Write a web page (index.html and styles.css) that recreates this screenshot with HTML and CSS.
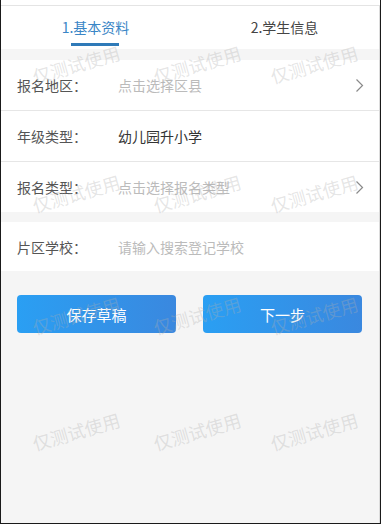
FILE: index.html
```html
<!DOCTYPE html>
<html lang="zh-CN">
<head>
<meta charset="utf-8">
<title>报名</title>
<link rel="stylesheet" href="styles.css">
</head>
<body>
<div class="frame">
  <div class="page">
    <div class="tabs">
      <div class="tab active">1.基本资料</div>
      <div class="tab">2.学生信息</div>
    </div>
    <div class="group">
      <div class="row">
        <span class="label">报名地区：</span>
        <span class="value placeholder">点击选择区县</span>
        <svg class="chev" width="9" height="15" viewBox="0 0 9 15"><path d="M1.5 1.5 L7.5 7.5 L1.5 13.5" fill="none" stroke="#8a8a8a" stroke-width="1.2"/></svg>
      </div>
      <div class="row">
        <span class="label">年级类型：</span>
        <span class="value">幼儿园升小学</span>
      </div>
      <div class="row">
        <span class="label">报名类型：</span>
        <span class="value placeholder">点击选择报名类型</span>
        <svg class="chev" width="9" height="15" viewBox="0 0 9 15"><path d="M1.5 1.5 L7.5 7.5 L1.5 13.5" fill="none" stroke="#8a8a8a" stroke-width="1.2"/></svg>
      </div>
    </div>
    <div class="group">
      <div class="row">
        <span class="label">片区学校：</span>
        <span class="value placeholder">请输入搜索登记学校</span>
      </div>
    </div>
    <div class="actions">
      <button class="btn">保存草稿</button>
      <button class="btn">下一步</button>
    </div>
  </div>
  <div class="watermarks">
    <span class="wm" style="left:75px;top:64px">仅测试使用</span>
    <span class="wm" style="left:196px;top:64px">仅测试使用</span>
    <span class="wm" style="left:313px;top:64px">仅测试使用</span>
    <span class="wm" style="left:75px;top:193px">仅测试使用</span>
    <span class="wm" style="left:196px;top:193px">仅测试使用</span>
    <span class="wm" style="left:313px;top:193px">仅测试使用</span>
    <span class="wm" style="left:75px;top:315px">仅测试使用</span>
    <span class="wm" style="left:196px;top:315px">仅测试使用</span>
    <span class="wm" style="left:313px;top:315px">仅测试使用</span>
    <span class="wm" style="left:75px;top:431px">仅测试使用</span>
    <span class="wm" style="left:196px;top:431px">仅测试使用</span>
    <span class="wm" style="left:313px;top:431px">仅测试使用</span>
  </div>
</div>
</body>
</html>
```
FILE: styles.css
```css
html, body {
  margin: 0;
  padding: 0;
  background: #ffffff;
}
body {
  font-family: "Noto Sans CJK SC", "Noto Sans", "Liberation Sans", sans-serif;
  width: 381px;
  height: 524px;
  overflow: hidden;
}
.frame {
  position: relative;
  box-sizing: border-box;
  width: 381px;
  height: 524px;
  border-left: 1px solid #1a1a1a;
  border-right: 1px solid #1a1a1a;
  border-bottom: 1px solid #1a1a1a;
  padding-top: 5px;
  background: #ffffff;
  overflow: hidden;
}
.page {
  box-sizing: border-box;
  height: 100%;
  border-top: 1px solid #e4e4e4;
  border-right: 1px solid #dcdcdc;
  background: #f5f5f5;
}
.tabs {
  display: flex;
  height: 43px;
  background: #ffffff;
}
.tab {
  flex: 1;
  display: flex;
  align-items: center;
  justify-content: center;
  position: relative;
  font-size: 14px;
  color: #444444;
  padding-bottom: 2px;
}
.tab.active {
  color: #3a86c6;
}
.tab.active::after {
  content: "";
  position: absolute;
  left: 50%;
  bottom: 3px;
  width: 48px;
  height: 3px;
  margin-left: -25px;
  background: #2f7ab8;
}
.group {
  margin-top: 11px;
  background: #ffffff;
}
.group + .group {
  margin-top: 10px;
}
.row {
  display: flex;
  align-items: center;
  height: 50px;
  padding: 0 15px 0 16px;
  border-bottom: 1px solid #e6e6e6;
  font-size: 14px;
}
.row:last-child {
  border-bottom: none;
}
.group + .group .row {
  height: 49px;
}
.label {
  width: 101px;
  color: #555555;
  flex: none;
}
.value {
  flex: 1;
  color: #333333;
}
.placeholder {
  color: #bbbbbb;
}
.chev {
  flex: none;
  margin-top: 1px;
}
.actions {
  display: flex;
  justify-content: space-between;
  padding: 24px 17px 0 16px;
}
.btn {
  width: 159px;
  height: 38px;
  border: none;
  border-radius: 4px;
  background: linear-gradient(to right, #2a9ff3, #3a88df);
  color: #ffffff;
  font-family: inherit;
  font-size: 15px;
  padding: 0;
}
.watermarks {
  position: absolute;
  left: 0;
  top: 0;
  width: 100%;
  height: 100%;
  pointer-events: none;
}
.wm {
  position: absolute;
  transform: translate(-50%, -50%) rotate(-16deg);
  font-size: 18px;
  line-height: 1;
  white-space: nowrap;
  color: rgba(175, 175, 175, 0.32);
}
```
